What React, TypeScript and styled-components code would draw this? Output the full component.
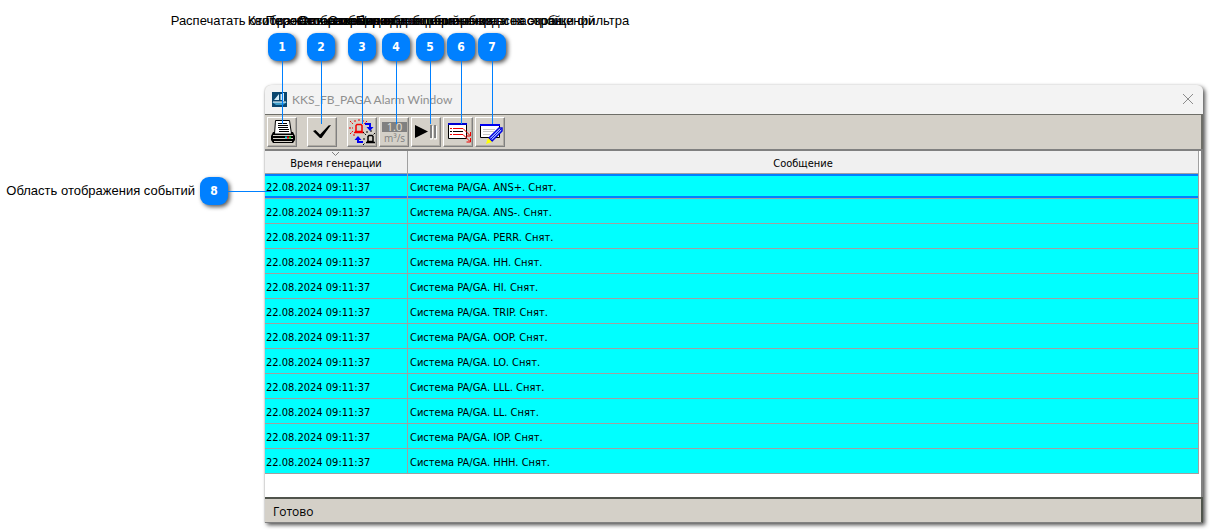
import React from "react";
import styled, { createGlobalStyle } from "styled-components";

const ui = '"DejaVu Sans Condensed", "DejaVu Sans", sans-serif';

const GlobalStyle = createGlobalStyle`
  * { box-sizing: border-box; }
  body { margin: 0; background: #fff; color: #000; font-family: "Liberation Sans", Arial, sans-serif; }
`;

const Page = styled.main`
  position: relative;
  display: grid;
  grid-template-columns: 265px minmax(0, 1fr);
  padding: 85px 9px 9px 0;
`;

const Callout = styled.div<{ $x: number }>`
  position: absolute;
  z-index: 2;
  top: 13px;
  left: ${(p) => p.$x}px;
  width: 1px;
  display: flex;
  flex-direction: column;
  align-items: center;
  pointer-events: none;
`;

const Label = styled.span`
  font-size: 13px;
  line-height: 16px;
  white-space: nowrap;
`;

const Badge = styled.span`
  flex: none;
  width: 28px;
  height: 28px;
  border-radius: 9px;
  background: #0080ff;
  color: #fff;
  font: bold 12px/28px ${ui};
  text-align: center;
  box-shadow: 2px 2px 4px rgba(0, 0, 0, 0.65);
`;

const CalloutBadge = styled(Badge)`
  margin: 4px 1px 0 0;
`;

const Stem = styled.span`
  width: 1px;
  height: 63px;
  background: #0080ff;
`;

const Side = styled.aside`
  position: relative;
  z-index: 2;
  display: flex;
  align-items: center;
  gap: 5px;
  height: 28px;
  margin: 92px -7px 0 0;
`;

const SideLabel = styled(Label)`
  width: 195px;
  text-align: right;
`;

const Arm = styled.span`
  flex: 1;
  height: 1px;
  margin-left: -5px;
  background: #0080ff;
`;

const Window = styled.section`
  min-width: 0;
  border-radius: 6px 6px 0 0;
  background: #d4d0c8;
  box-shadow: 2px 2px 4px rgba(0, 0, 0, 0.7), -1px 0 1px rgba(0, 0, 0, 0.08);
`;

const TitleBar = styled.header`
  display: flex;
  align-items: center;
  height: 29px;
  padding: 0 9px 0 7px;
  border-radius: 6px 6px 0 0;
  background: #f3f3f3;
`;

const Title = styled.h1`
  flex: 1;
  margin: 0 0 0 5px;
  color: #8f8f8f;
  font: 12px/16px Lato, "Noto Sans", sans-serif;
`;

const CloseButton = styled.button`
  display: flex;
  padding: 0 0 2px;
  border: 0;
  background: none;
`;

const Toolbar = styled.div`
  display: flex;
  gap: 10px;
  padding: 2px;
  border: solid #6e6e68;
  border-width: 1px 2px 0 0;
  background: #d4d0c8;
`;

const ToolGroup = styled.div`
  display: flex;
  gap: 2px;
`;

const ToolButton = styled.button`
  width: 30px;
  height: 30px;
  padding: 0;
  border: 1px solid;
  border-color: #fff #808080 #808080 #fff;
  background: #d4d0c8;
  box-shadow: inset -1px -1px 0 #b0aca4;
  svg { display: block; margin: 1px; }
`;

const ListArea = styled.div`
  padding: 0 2px 23px 0;
  border: solid #808080;
  border-width: 2px 2px 0 0;
  background: #fff;
`;

const Events = styled.table`
  width: 100%;
  border-collapse: separate;
  border-spacing: 0;
  table-layout: fixed;
  font: 11px/14px ${ui};
`;

const HeadCell = styled.th<{ $width?: number }>`
  position: relative;
  width: ${(p) => (p.$width ? `${p.$width}px` : "auto")};
  height: 23px;
  padding: 4px 0 0;
  border: solid #a0a0a0;
  border-width: 0 1px 1px 0;
  background: #f0f0f0;
  font-weight: normal;
  text-align: center;
`;

const SortMark = styled.svg`
  position: absolute;
  top: 1px;
  left: 66px;
`;

const Row = styled.tr<{ $selected: boolean }>`
  td {
    height: 25px;
    padding: 3px 0 0 1px;
    border: solid #a0a0a0;
    border-width: 0 1px 1px 0;
    background: #00ffff;
    box-shadow: ${(p) => (p.$selected ? "inset 0 2px #0080ff, inset 0 -2px #0080ff" : "none")};
    white-space: nowrap;
  }
  td + td { padding-left: 2px; }
`;

const StatusBar = styled.footer`
  height: 26px;
  padding: 2px 8px 0;
  border: solid #50544c;
  border-width: 2px 2px 1px 0;
  border-bottom-color: #808080;
  font: 12px/22px "Open Sans", "Noto Sans", sans-serif;
`;

const callouts = [
  { x: 282, text: "Распечатать отображаемые события" },
  { x: 321, text: "Квитировать сообщение" },
  { x: 362, text: "Переключение вида сообщений" },
  { x: 396, text: "Отображение единиц измерения" },
  { x: 430, text: "Остановка/возобновление вывода на экран" },
  { x: 461, text: "Открыть окно отображения всех сообщений" },
  { x: 492, text: "Переход в окно выбора и настройки фильтра" },
];

const messages = ["ANS+", "ANS-", "PERR", "HH", "HI", "TRIP", "OOP", "LO", "LLL", "LL", "IOP", "HHH"];

const Icon = ({ children }: { children: React.ReactNode }) => (
  <svg width="26" height="26" viewBox="0 0 26 26" fill="none" aria-hidden="true">
    {children}
  </svg>
);

const PrintIcon = () => (
  <Icon>
    <path d="M6.500 1.500H20.500L22.500 15H5.500Z" fill="#fff" stroke="#000" />
    <path d="M9 4.500H18M9 6.500H19M9 8.500H19M10 10.500H20M10 12.500H20" stroke="#000" />
    <path d="M4 13H6V15H22V13H24L26 17V21L24 24H4L2 21V17Z" fill="#000" />
    <path d="M4 16.500H24M4 19.500H24M5 22.500H23" stroke="#d4d0c8" />
    <path d="M16 18.500H18" stroke="#00c8d8" strokeWidth="2" />
    <path d="M18 18.500H20" stroke="#e00000" strokeWidth="2" />
    <path d="M20 18.500H22" stroke="#00c020" strokeWidth="2" />
  </Icon>
);

const CheckIcon = () => (
  <Icon>
    <path d="M4 12L6.500 11L11 15.500L19.500 6.500L22 6L12.500 19H11Z" fill="#000" />
  </Icon>
);

const LampIcon = () => (
  <Icon>
    <path d="M7 12V6.500L8 5.500H12L13 6.500V12.500H6M5 13.500H15" stroke="#f00000" strokeWidth="1.500" />
    <path d="M1 2L4 5M6 1V3M10 0V3M18 2L15 5M14 1V3M0 9H4M1 15L4 12M5 15V17" stroke="#f00000" strokeDasharray="2 1" />
    <path d="M19 23V17.500L20 16.500H23L24 17.500V22.500H18M17 23.500H26" stroke="#000" strokeWidth="1.500" />
    <path d="M14 13L17 16M18 12V14M22 11V14M26 14L24 16M14 20H17M14 26L16 24" stroke="#000" strokeDasharray="2 1" />
    <path d="M16 5H21V9M14 23H9V20" stroke="#0000f0" strokeWidth="2" />
    <path d="M17.500 8H24.500L21 12ZM5.500 21H12.500L9 17Z" fill="#0000f0" />
  </Icon>
);

const UnitIcon = () => (
  <Icon>
    <path d="M1 3H26V13H1Z" fill="#808080" />
    <text x="13.500" y="12" fill="#e4e0d8" fontSize="11" textAnchor="middle" fontFamily="Open Sans, sans-serif">1.0</text>
    <text x="13.500" y="23" fill="#808080" fontSize="10" textAnchor="middle" fontFamily="Open Sans, sans-serif">m³/s</text>
  </Icon>
);

const PlayIcon = () => (
  <Icon>
    <path d="M2 6L15 12.500L2 19Z" fill="#000" />
    <path d="M17 6H19V19H17ZM21 6H23V19H21Z" fill="#808080" />
    <path d="M19.500 7V20H17M23.500 7V20H21" stroke="#fff" />
  </Icon>
);

const ListIcon = () => (
  <Icon>
    <path d="M3.500 5H21.500V19.500H3.500Z" fill="#fff" stroke="#000" />
    <path d="M3 5H22" stroke="#0000d0" strokeWidth="2" />
    <path d="M5 9.500H7M8 9.500H18L25 16.500M5 15.500H7M8 15.500H18L25 22.500" stroke="#f00000" />
    <path d="M5 12.500H7M8 12.500H18" stroke="#000" />
    <path d="M25.500 13V17H21.500M25.500 19V23H21.500" stroke="#f00000" />
  </Icon>
);

const EditIcon = () => (
  <Icon>
    <path d="M3.500 6H22.500V18.500H3.500Z" fill="#fff" stroke="#000" />
    <path d="M3 6H23" stroke="#0000f0" strokeWidth="2" />
    <path d="M6 10.500H18M6 12.500H17M6 15.500H13" stroke="#c8c8c8" />
    <path d="M12 19L22 9H25V12L15 22Z" fill="#a0b8ff" stroke="#0000e0" strokeWidth="1.500" />
    <path d="M14 20L24 10" stroke="#0000e0" />
    <path d="M11 19L15 23L9 25Z" fill="#ffff00" />
  </Icon>
);

const groups = [
  [{ name: "Печать", icon: <PrintIcon /> }],
  [{ name: "Квитировать", icon: <CheckIcon /> }],
  [
    { name: "Переключить", icon: <LampIcon /> },
    { name: "Единицы", icon: <UnitIcon /> },
    { name: "Пауза", icon: <PlayIcon /> },
    { name: "Список", icon: <ListIcon /> },
    { name: "Фильтр", icon: <EditIcon /> },
  ],
];

export default function App() {
  return (
    <>
      <GlobalStyle />
      <Page>
        {callouts.map((c, i) => (
          <Callout key={c.x} $x={c.x}>
            <Label>{c.text}</Label>
            <CalloutBadge>{i + 1}</CalloutBadge>
            <Stem />
          </Callout>
        ))}
        <Side>
          <SideLabel>Область отображения событий</SideLabel>
          <Badge>8</Badge>
          <Arm />
        </Side>
        <Window>
          <TitleBar>
            <svg width="15" height="15" viewBox="0 0 15 15" aria-hidden="true">
              <path d="M0 0H15V15H0Z" fill="#0b466e" />
              <path d="M2 8L7 2V8ZM8.500 2H10V8H8.500ZM11 1H12V9H11Z" fill="#d8eef8" />
              <path d="M0 10H15L11 13H4Z" fill="#3d9cc8" />
              <path d="M1 10H14" stroke="#fff" />
            </svg>
            <Title>KKS_FB_PAGA Alarm Window</Title>
            <CloseButton aria-label="Закрыть">
              <svg width="12" height="12" viewBox="0 0 12 12" stroke="#8c8c8c" aria-hidden="true">
                <path d="M1 1L11 11M11 1L1 11" />
              </svg>
            </CloseButton>
          </TitleBar>
          <Toolbar role="toolbar">
            {groups.map((g, i) => (
              <ToolGroup key={i}>
                {g.map((b) => (
                  <ToolButton key={b.name} aria-label={b.name}>{b.icon}</ToolButton>
                ))}
              </ToolGroup>
            ))}
          </Toolbar>
          <ListArea>
            <Events>
              <thead>
                <tr>
                  <HeadCell $width={143}>
                    <SortMark width="9" height="5" viewBox="0 0 9 5" fill="none" stroke="#808080">
                      <path d="M1 0L4.500 3.500L8 0" />
                    </SortMark>
                    Время генерации
                  </HeadCell>
                  <HeadCell>Сообщение</HeadCell>
                </tr>
              </thead>
              <tbody>
                {messages.map((m, i) => (
                  <Row key={m} $selected={i === 0}>
                    <td>22.08.2024 09:11:37</td>
                    <td>Система PA/GA. {m}. Снят.</td>
                  </Row>
                ))}
              </tbody>
            </Events>
          </ListArea>
          <StatusBar>Готово</StatusBar>
        </Window>
      </Page>
    </>
  );
}
